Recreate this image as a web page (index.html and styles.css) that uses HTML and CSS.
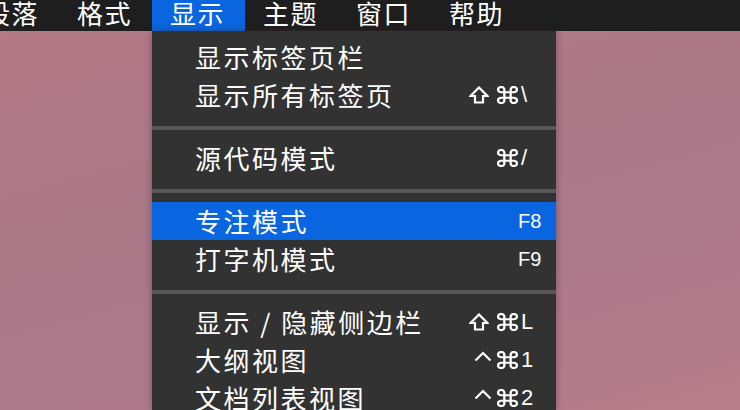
FILE: index.html
```html
<!DOCTYPE html>
<html lang="zh-CN">
<head>
    <meta charset="UTF-8">
    <title>显示菜单</title>
    <link rel="stylesheet" href="styles.css">
</head>
<body>
    <header class="menubar">
        <span class="menu-title first">段落</span>
        <span class="menu-title">格式</span>
        <span class="menu-title active">显示</span>
        <span class="menu-title">主题</span>
        <span class="menu-title">窗口</span>
        <span class="menu-title">帮助</span>
    </header>

    <div class="dropdown">
        <div class="menu-item">
            <span class="label">显示标签页栏</span>
        </div>
        <div class="menu-item">
            <span class="label">显示所有标签页</span>
            <span class="shortcut">
                <span class="mods">
                    <svg class="mod-shift" width="20" height="18" viewBox="0 0 20 18"><path d="M10 1.5 L18.5 10 H14 V16.5 H6 V10 H1.5 Z"/></svg>
                    <svg class="mod-cmd" width="21" height="18" viewBox="2 2 20 20" preserveAspectRatio="none"><path d="M15 6v12a3 3 0 1 0 3-3H6a3 3 0 1 0 3 3V6a3 3 0 1 0-3 3h12a3 3 0 1 0-3-3"/></svg>
                </span>
                <span class="key">\</span>
            </span>
        </div>

        <div class="separator"></div>

        <div class="menu-item">
            <span class="label">源代码模式</span>
            <span class="shortcut">
                <span class="mods">
                    <svg class="mod-cmd" width="21" height="18" viewBox="2 2 20 20" preserveAspectRatio="none"><path d="M15 6v12a3 3 0 1 0 3-3H6a3 3 0 1 0 3 3V6a3 3 0 1 0-3 3h12a3 3 0 1 0-3-3"/></svg>
                </span>
                <span class="key">/</span>
            </span>
        </div>

        <div class="separator"></div>

        <div class="menu-item selected">
            <span class="label">专注模式</span>
            <span class="shortcut"><span class="key fkey">F8</span></span>
        </div>
        <div class="menu-item">
            <span class="label">打字机模式</span>
            <span class="shortcut"><span class="key fkey">F9</span></span>
        </div>

        <div class="separator"></div>

        <div class="menu-item">
            <span class="label">显示 / 隐藏侧边栏</span>
            <span class="shortcut">
                <span class="mods">
                    <svg class="mod-shift" width="20" height="18" viewBox="0 0 20 18"><path d="M10 1.5 L18.5 10 H14 V16.5 H6 V10 H1.5 Z"/></svg>
                    <svg class="mod-cmd" width="21" height="18" viewBox="2 2 20 20" preserveAspectRatio="none"><path d="M15 6v12a3 3 0 1 0 3-3H6a3 3 0 1 0 3 3V6a3 3 0 1 0-3 3h12a3 3 0 1 0-3-3"/></svg>
                </span>
                <span class="key">L</span>
            </span>
        </div>
        <div class="menu-item">
            <span class="label">大纲视图</span>
            <span class="shortcut">
                <span class="mods">
                    <svg class="mod-ctrl" width="18" height="18" viewBox="0 0 18 18"><path d="M1.5 9.5 L9 2 L16.5 9.5"/></svg>
                    <svg class="mod-cmd" width="21" height="18" viewBox="2 2 20 20" preserveAspectRatio="none"><path d="M15 6v12a3 3 0 1 0 3-3H6a3 3 0 1 0 3 3V6a3 3 0 1 0-3 3h12a3 3 0 1 0-3-3"/></svg>
                </span>
                <span class="key">1</span>
            </span>
        </div>
        <div class="menu-item">
            <span class="label">文档列表视图</span>
            <span class="shortcut">
                <span class="mods">
                    <svg class="mod-ctrl" width="18" height="18" viewBox="0 0 18 18"><path d="M1.5 9.5 L9 2 L16.5 9.5"/></svg>
                    <svg class="mod-cmd" width="21" height="18" viewBox="2 2 20 20" preserveAspectRatio="none"><path d="M15 6v12a3 3 0 1 0 3-3H6a3 3 0 1 0 3 3V6a3 3 0 1 0-3 3h12a3 3 0 1 0-3-3"/></svg>
                </span>
                <span class="key">2</span>
            </span>
        </div>
    </div>
</body>
</html>
```

FILE: styles.css
```css
* {
    margin: 0;
    padding: 0;
    box-sizing: border-box;
}

body {
    width: 740px;
    height: 410px;
    overflow: hidden;
    position: relative;
    font-family: "Noto Sans CJK SC", "Noto Sans", sans-serif;
    color: #ffffff;
    background: linear-gradient(165deg, #b67a87 0%, #ab7888 40%, #ad7a8c 70%, #b77d8a 100%);
}

/* top menu bar */
.menubar {
    display: flex;
    height: 31px;
    background-color: #1e1e1e;
    align-items: flex-start;
}

.menu-title {
    flex: 0 0 93px;
    height: 31px;
    text-align: center;
    font-size: 26px;
    line-height: 26px;
    letter-spacing: 1.5px;
    padding-right: 2px;
}

.menu-title.first {
    margin-left: -34px;
}

.menu-title.active {
    background-color: #0a66e0;
}

/* dropdown */
.dropdown {
    position: absolute;
    left: 152px;
    top: 31px;
    bottom: 0;
    width: 404px;
    overflow: hidden;
    padding-top: 7px;
    background-color: #323232;
    box-shadow: 0 0 7px rgba(60, 30, 40, 0.45);
}

.menu-item {
    display: flex;
    align-items: center;
    height: 38px;
    padding: 0 13px 0 43px;
}

.menu-item.selected {
    background-color: #0a66e0;
}

.label {
    flex: 1;
    font-size: 26px;
    letter-spacing: 2.5px;
    line-height: 38px;
    white-space: nowrap;
}

.shortcut {
    display: flex;
    align-items: center;
}

.mods {
    display: flex;
    align-items: center;
    justify-content: flex-end;
}

.mods svg {
    fill: none;
    stroke: #ffffff;
    stroke-width: 2.2;
}

.mod-shift {
    margin-right: 8px;
    stroke-linejoin: miter;
}

.mod-cmd {
    stroke-width: 2;
}

.mod-ctrl {
    margin-right: 5px;
}

.key {
    width: 25px;
    padding-left: 3px;
    font-family: "Liberation Sans", Arial, sans-serif;
    font-size: 22px;
    line-height: 38px;
}

.key.fkey {
    padding-left: 0;
    font-size: 20px;
}

.separator {
    height: 25px;
    padding-top: 12px;
}

.separator::before {
    content: '';
    display: block;
    height: 4px;
    background-color: #575757;
}
```
